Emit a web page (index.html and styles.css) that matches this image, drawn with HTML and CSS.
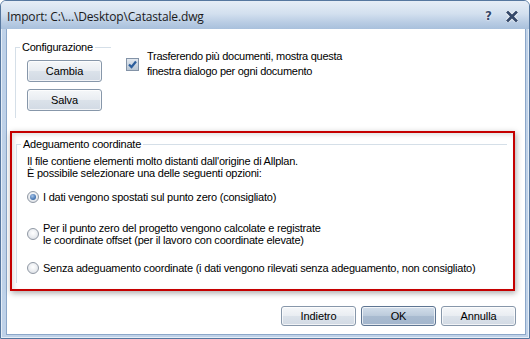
FILE: index.html
```html
<!DOCTYPE html>
<html lang="it">
<head>
<meta charset="utf-8">
<title>Import</title>
<link rel="stylesheet" href="styles.css">
</head>
<body>
<div class="window">
  <div class="titlebar">
    <span class="title">Import: C:\...\Desktop\Catastale.dwg</span>
    <div class="title-buttons">
      <span class="help">?</span>
      <svg class="close" width="12" height="11" viewBox="0 0 12 11">
        <path d="M2 1.5 L10 9.5 M10 1.5 L2 9.5" stroke="#ffffff" stroke-width="4.6" stroke-linecap="round" fill="none" opacity="0.7"/>
        <path d="M2 1.5 L10 9.5 M10 1.5 L2 9.5" stroke="#35496a" stroke-width="2.8" stroke-linecap="square" fill="none"/>
      </svg>
    </div>
  </div>
  <div class="client">
    <div class="top">
      <fieldset class="group config">
        <legend>Configurazione</legend>
        <div class="config-buttons">
          <button class="btn">Cambia</button>
          <button class="btn">Salva</button>
        </div>
      </fieldset>
      <div class="check">
        <span class="checkbox">
          <svg width="11" height="11" viewBox="0 0 11 11"><path d="M2 5.5 L4.5 8 L9 2.5" stroke="#2c5e9c" stroke-width="2.2" fill="none"/></svg>
        </span>
        <span class="check-text">Trasferendo più documenti, mostra questa<br>finestra dialogo per ogni documento</span>
      </div>
    </div>
    <div class="highlight">
      <fieldset class="group coords">
        <legend>Adeguamento coordinate</legend>
        <div class="coords-body">
          <p class="info">Il file contiene elementi molto distanti dall'origine di Allplan.<br>È possibile selezionare una delle seguenti opzioni:</p>
          <div class="radio-row row1"><span class="radio checked"></span><span>I dati vengono spostati sul punto zero (consigliato)</span></div>
          <div class="radio-row row2"><span class="radio"></span><span>Per il punto zero del progetto vengono calcolate e registrate<br>le coordinate offset (per il lavoro con coordinate elevate)</span></div>
          <div class="radio-row row3"><span class="radio"></span><span>Senza adeguamento coordinate (i dati vengono rilevati senza adeguamento, non consigliato)</span></div>
        </div>
      </fieldset>
    </div>
    <div class="actions">
      <button class="btn wide">Indietro</button>
      <button class="btn wide default">OK</button>
      <button class="btn wide">Annulla</button>
    </div>
  </div>
</div>
</body>
</html>
```

FILE: styles.css
```css
* { box-sizing: border-box; }
html, body { margin: 0; padding: 0; background: #ffffff; }
body {
  width: 530px;
  height: 339px;
  overflow: hidden;
  font-family: "Liberation Sans", Arial, sans-serif;
  font-size: 11px;
  letter-spacing: -0.22px;
  color: #000;
}
.window {
  width: 530px;
  height: 339px;
  border: 1px solid #56779f;
  border-radius: 6px 6px 0 0;
  background: linear-gradient(to bottom, #c9d9ec 0px, #bed1e8 40px, #bfd2e9 100%);
  box-shadow: inset 1px 1px 0 #e6eef7, inset -1px -1px 0 #e6eef7;
  display: flex;
  flex-direction: column;
}
.titlebar {
  height: 28px;
  flex: none;
  display: flex;
  align-items: center;
  padding: 2px 0 0 6px;
  border-radius: 5px 5px 0 0;
  background: linear-gradient(to bottom, #e6edf6 0%, #d3e0ef 45%, #bacde4 75%, #a8c0dc 100%);
}
.title {
  font-family: "Open Sans", "Liberation Sans", sans-serif;
  font-size: 12px;
  letter-spacing: -0.15px;
  color: #1a1a1a;
  flex: 1;
}
.title-buttons {
  display: flex;
  align-items: center;
  gap: 14px;
  padding-right: 11px;
}
.help {
  font-family: "DejaVu Sans", sans-serif;
  font-weight: bold;
  font-size: 12px;
  letter-spacing: 0;
  color: #35496a;
  text-shadow: 0 0 2px #ffffff, 0 0 1px #ffffff;
  line-height: 12px;
}
.close { display: block; }
.client {
  flex: 1;
  margin: 0 3px 3px 5px;
  border: 1px solid #8ca7c9;
  border-top: none;
  background: #ffffff;
  display: flex;
  flex-direction: column;
}
.top {
  display: flex;
  align-items: flex-start;
  height: 102px;
}
.group {
  margin: 0;
  padding: 0;
  border: none;
  border-top: 1px solid #d5dfe8;
  border-left: 1px solid #d5dfe8;
}
.group legend {
  padding: 0 2px;
  margin-left: 4px;
  line-height: 12px;
  font-size: 11px;
}
.config {
  margin: 12px 0 0 8px;
  width: 96px;
  height: 77px;
}
.config-buttons {
  padding: 7px 0 0 11px;
  display: flex;
  flex-direction: column;
  gap: 7px;
  align-items: flex-start;
}
.btn {
  font-family: "Liberation Sans", Arial, sans-serif;
  font-size: 11px;
  letter-spacing: -0.1px;
  color: #000;
  width: 75px;
  height: 22px;
  padding: 0;
  border: 1px solid #8797aa;
  border-radius: 3px;
  background: linear-gradient(to bottom, #f5f7f9 0%, #e9edf2 48%, #dbe2ea 52%, #d2dae4 100%);
  box-shadow: inset 0 0 0 1px rgba(255,255,255,0.7);
}
.check {
  display: flex;
  align-items: center;
  margin: 20px 0 0 15px;
}
.checkbox {
  width: 13px;
  height: 13px;
  border: 1px solid #8393a7;
  background: linear-gradient(to bottom, #e2e8ef, #b9c6d4);
  display: flex;
  align-items: center;
  justify-content: center;
  flex: none;
}
.checkbox svg { display: block; }
.check-text {
  margin-left: 8px;
  line-height: 15px;
  letter-spacing: -0.28px;
}
.highlight {
  margin-left: 3px;
  width: 505px;
  height: 160px;
  border: 2px solid #c50000;
  padding: 5px 6px 6px 4px;
  box-shadow: 1px 2px 6px rgba(0,0,0,0.35), inset 2px 2px 4px rgba(0,0,0,0.12);
  display: flex;
}
.coords {
  flex: 1;
}
.coords-body {
  padding-left: 10px;
}
.info {
  margin: 5px 0 0 0;
  line-height: 12px;
}
.radio-row {
  display: flex;
  align-items: center;
  gap: 4px;
  line-height: 12px;
}
.row1 { margin-top: 12px; }
.row2 { margin-top: 19px; }
.row3 { margin-top: 16px; }
.radio {
  width: 12px;
  height: 12px;
  border-radius: 50%;
  border: 1px solid #9098a4;
  background: radial-gradient(circle at 50% 40%, #ffffff 0%, #eef0f3 45%, #d3d8df 100%);
  flex: none;
  display: flex;
  align-items: center;
  justify-content: center;
}
.radio.checked::after {
  content: "";
  width: 6px;
  height: 6px;
  border-radius: 50%;
  background: radial-gradient(circle at 40% 35%, #a6c4e8 0%, #4a79b5 60%, #2c5590 100%);
}
.actions {
  display: flex;
  justify-content: flex-end;
  gap: 5px;
  margin-top: 15px;
  padding-right: 9px;
}
.btn.wide { height: 20px; }
.btn.default {
  border-color: #5e7592;
  background: linear-gradient(to bottom, #d3deea 0%, #bccbdc 48%, #a9bbd0 52%, #a2b5cc 100%);
}
```
